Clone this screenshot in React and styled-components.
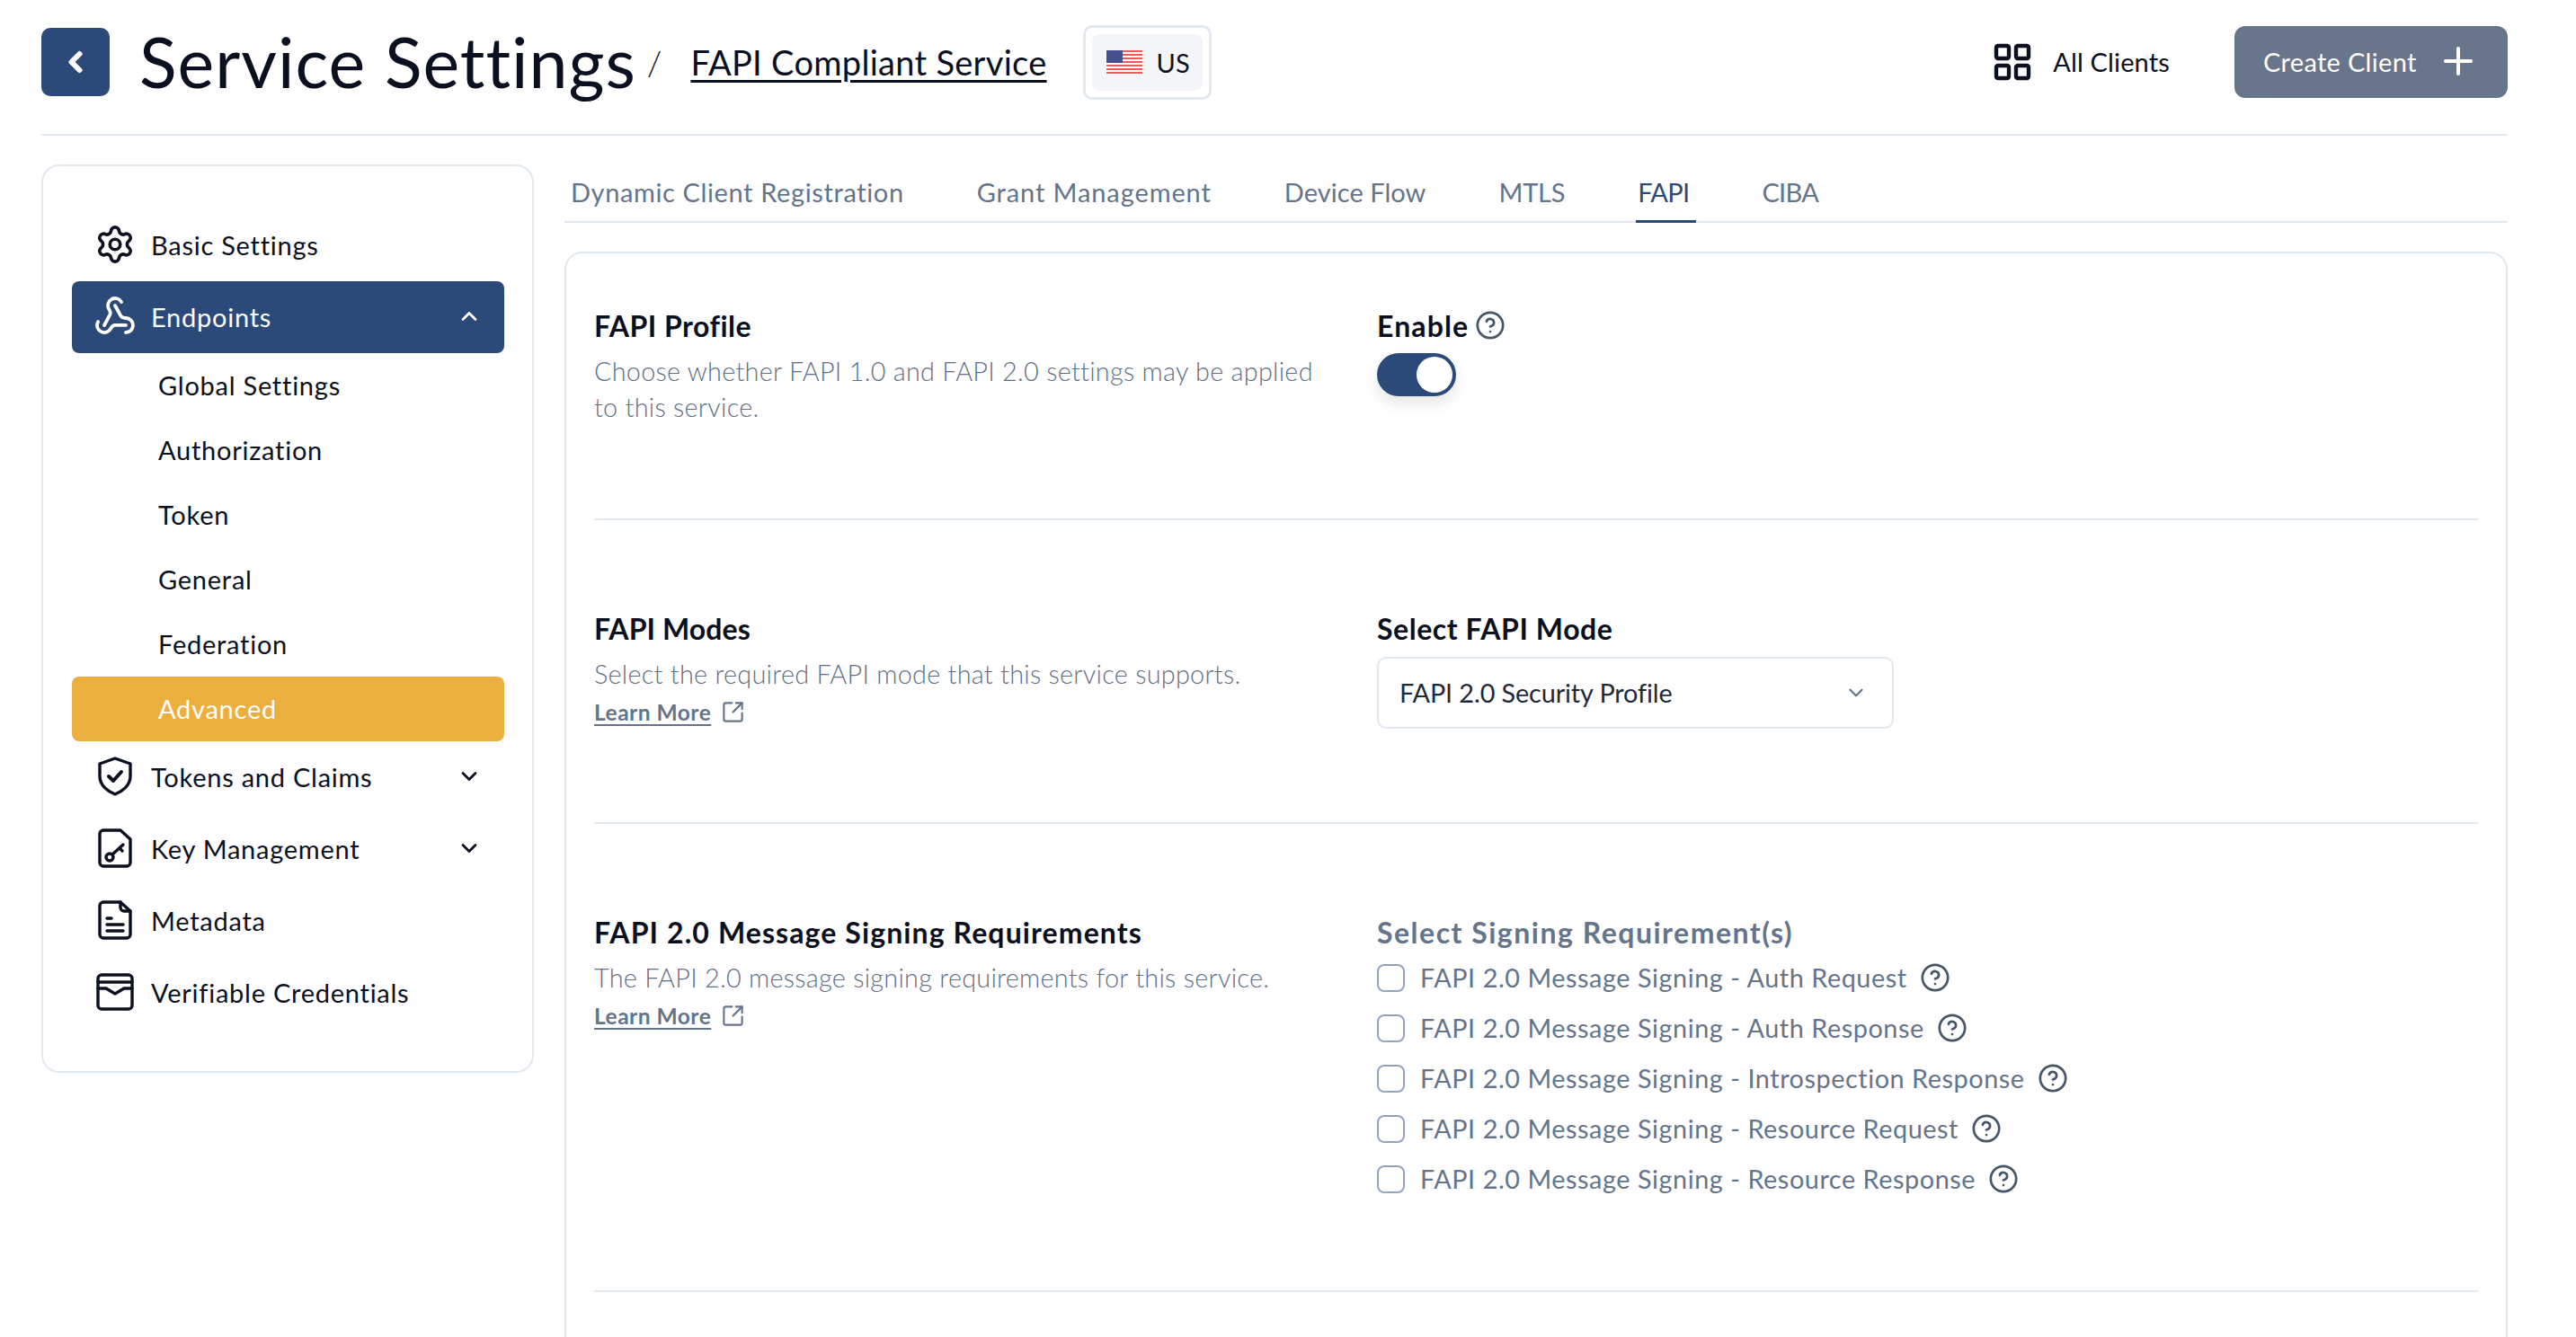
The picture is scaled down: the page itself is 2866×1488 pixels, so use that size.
import React from "react";
import styled, { createGlobalStyle } from "styled-components";
import {
  ChevronDown,
  ChevronLeft,
  ChevronUp,
  CircleHelp,
  LayoutGrid,
  Plus,
  Settings,
  SquareArrowOutUpRight,
  Webhook,
} from "lucide-react";

const GlobalStyle = createGlobalStyle`
  html, body {
    margin: 0;
    padding: 0;
    height: 1488px;
    overflow: hidden;
    background: #fff;
  }
  * { box-sizing: border-box; }
  body {
    font-family: "Lato", "Open Sans", sans-serif;
    color: #0b1020;
  }
`;

const Page = styled.div`
  width: 2866px;
  height: 1488px;
  overflow: hidden;
  padding: 31px 76px 0 46px;
`;

const Header = styled.header`
  display: flex;
  align-items: center;
  height: 120px;
  padding-bottom: 42px;
  border-bottom: 2px solid #e2e8f0;
`;

const BackButton = styled.button`
  display: flex;
  align-items: center;
  justify-content: center;
  width: 76px;
  height: 76px;
  padding: 0;
  border: none;
  border-radius: 10px;
  background: #2b4a7a;
  color: #fff;
`;

const Title = styled.h1`
  margin: 0 0 3px 33px;
  font-size: 77px;
  font-weight: 400;
  line-height: 90px;
  letter-spacing: 1px;
  color: #0b1020;
`;

const Slash = styled.span`
  margin: 0 32px 0 12px;
  font-size: 38px;
  font-weight: 300;
`;

const ServiceLink = styled.a`
  font-size: 38px;
  letter-spacing: 0.3px;
  text-decoration: underline;
  text-decoration-thickness: 3px;
  text-underline-offset: 5px;
  color: #0b1020;
`;

const RegionChip = styled.div`
  margin-left: 40px;
  padding: 7px;
  border: 3px solid #e2e8f0;
  border-radius: 10px;
`;

const RegionInner = styled.div`
  display: flex;
  align-items: center;
  gap: 16px;
  width: 123px;
  height: 63px;
  padding-left: 16px;
  border-radius: 8px;
  background: #f3f5f9;
  font-size: 29px;
`;

const HeaderActions = styled.div`
  display: flex;
  align-items: center;
  margin-left: auto;
`;

const AllClients = styled.div`
  display: flex;
  align-items: center;
  gap: 21px;
  margin-right: 72px;
  padding-bottom: 1px;
  font-size: 29px;
  letter-spacing: 0.15px;
`;

const CreateButton = styled.button`
  display: flex;
  align-items: center;
  justify-content: space-between;
  width: 304px;
  height: 80px;
  padding: 0 31px 2px 32px;
  border: none;
  border-radius: 12px;
  background: #68758b;
  color: #fff;
  font-family: inherit;
  font-size: 29px;
  letter-spacing: 0.3px;
`;

const Body = styled.div`
  display: flex;
  align-items: flex-start;
  gap: 34px;
  margin-top: 32px;
`;

const Sidebar = styled.nav`
  flex: 0 0 548px;
  padding: 48px 31px 47px 32px;
  border: 2px solid #e2e8f0;
  border-radius: 20px;
`;

const NavRow = styled.div`
  display: flex;
  align-items: center;
  gap: 18px;
  height: 80px;
  padding: 0 25px 2px 26px;
  border-radius: 8px;
  font-size: 29px;
  letter-spacing: 0.75px;
  background: ${({ $active }) => ($active ? "#2b4a7a" : "transparent")};
  color: ${({ $active }) => ($active ? "#fff" : "#0b1020")};
`;

const NavIcon = styled.span`
  display: flex;
  justify-content: center;
  flex: 0 0 44px;
  width: 44px;
  min-width: 0;
  svg {
    flex-shrink: 0;
  }
`;

const NavChevron = styled.span`
  display: flex;
  margin-left: auto;
`;

const SubRow = styled.div`
  display: flex;
  align-items: center;
  height: 72px;
  padding: 0 0 2px 96px;
  border-radius: 8px;
  font-size: 29px;
  letter-spacing: 0.75px;
  background: ${({ $active }) => ($active ? "#ecae3d" : "transparent")};
  color: ${({ $active }) => ($active ? "#fff" : "#0b1020")};
`;

const Main = styled.main`
  flex: 1;
  min-width: 0;
`;

const Tabs = styled.div`
  display: flex;
  gap: 81px;
  height: 66px;
  padding-left: 7px;
  margin-top: -1px;
  border-bottom: 2px solid #e2e8f0;
`;

const Tab = styled.div`
  position: relative;
  height: 66px;
  padding-top: 14px;
  font-size: 29px;
  letter-spacing: ${({ $spacing }) => $spacing}px;
  color: ${({ $active }) => ($active ? "#2b4a7a" : "#64748b")};
  &::after {
    content: "";
    display: ${({ $active }) => ($active ? "block" : "none")};
    position: absolute;
    left: -2px;
    right: -8px;
    bottom: 0;
    height: 3px;
    background: #2b4a7a;
  }
`;

const Card = styled.section`
  height: 1300px;
  margin-top: 32px;
  padding: 60px 31px 0 31px;
  border: 2px solid #e2e8f0;
  border-radius: 20px;
`;

const SettingRow = styled.div`
  display: grid;
  grid-template-columns: 871px 1fr;
  padding-bottom: ${({ $bottom }) => $bottom}px;
  margin-bottom: 100px;
  border-bottom: 2px solid #e2e8f0;
`;

const SectionTitle = styled.h3`
  display: flex;
  align-items: center;
  margin: 0;
  height: 40px;
  font-size: 32px;
  font-weight: 700;
  letter-spacing: ${({ $spacing = 1.1 }) => $spacing}px;
  color: ${({ $muted }) => ($muted ? "#64748b" : "#0b1020")};
`;

const Description = styled.p`
  width: 810px;
  margin: 11px 0 0;
  font-size: 28.8px;
  font-weight: 300;
  line-height: 40px;
  letter-spacing: 0.27px;
  color: #5f6f86;
`;

const LearnMore = styled.a`
  display: flex;
  align-items: center;
  gap: 11px;
  margin-top: 8px;
  font-size: 24.5px;
  font-weight: 700;
  letter-spacing: 0.5px;
  color: #64748b;
  span {
    text-decoration: underline;
    text-underline-offset: 4px;
  }
`;

const Toggle = styled.div`
  display: flex;
  align-items: center;
  justify-content: flex-end;
  width: 88px;
  height: 48px;
  margin-top: 11px;
  padding-right: 4px;
  border-radius: 24px;
  background: #2b4a7a;
  box-shadow: 0 8px 16px rgba(15, 23, 42, 0.1);
`;

const ToggleKnob = styled.div`
  width: 40px;
  height: 40px;
  border-radius: 50%;
  background: #fff;
`;

const SelectBox = styled.div`
  display: flex;
  align-items: center;
  justify-content: space-between;
  width: 575px;
  height: 80px;
  margin-top: 12px;
  padding: 0 27px 0 23px;
  border: 2px solid #e2e8f0;
  border-radius: 10px;
  font-size: 28.8px;
  letter-spacing: -0.1px;
  color: #1e293b;
`;

const CheckList = styled.div`
  margin-top: 3px;
`;

const CheckRow = styled.label`
  display: flex;
  align-items: center;
  height: 56px;
  font-size: 28.8px;
  letter-spacing: 0.56px;
  color: #64748b;
`;

const CheckBox = styled.span`
  flex: 0 0 31px;
  height: 31px;
  margin-right: 17px;
  border: 2px solid #94a3c0;
  border-radius: 8px;
`;

const HelpWrap = styled.span`
  display: flex;
  margin-left: ${({ $gap }) => $gap}px;
  color: #475569;
`;

const IconPath = ({ children }) => (
  <svg width="44" height="44" viewBox="0 0 44 44" fill="none" stroke="currentColor" strokeWidth="3.4" strokeLinecap="round" strokeLinejoin="round">
    {children}
  </svg>
);

const ShieldIcon = () => (
  <IconPath>
    <path d="M22 2 L39 8 V22 C39 32 30 39 22 42 C14 39 5 32 5 22 V8 Z" />
    <path d="M15 22 L20 27 L29 17" strokeWidth="4" />
  </IconPath>
);

const KeyFileIcon = () => (
  <IconPath>
    <path d="M10 2 H28 L39 12 V38 A4 4 0 0 1 35 42 H9 A4 4 0 0 1 5 38 V6 A4 4 0 0 1 9 2 Z" />
    <circle cx="16" cy="32" r="4" />
    <path d="M19 29 L31 18 M27 22 L30 25" />
  </IconPath>
);

const FileIcon = () => (
  <IconPath>
    <path d="M10 2 H28 L39 12 V38 A4 4 0 0 1 35 42 H9 A4 4 0 0 1 5 38 V6 A4 4 0 0 1 9 2 Z" />
    <path d="M28 2 V8 A4 4 0 0 0 32 12 H39" />
    <path d="M13 20 H18 M13 27 H31 M13 34 H31" />
  </IconPath>
);

const WalletIcon = () => (
  <IconPath>
    <rect x="3" y="3" width="38" height="38" rx="4" />
    <path d="M3 11 H41 M3 18 H12 L22 24 L32 18 H41" />
  </IconPath>
);

const UsFlag = () => (
  <svg width="40" height="26" viewBox="0 0 40 26">
    <rect width="40" height="26" fill="#fff" />
    {[0, 4, 8, 12, 16, 20, 24].map((y) => (
      <rect key={y} y={y} width="40" height="2" fill="#ef5a5f" />
    ))}
    <rect width="18" height="14" fill="#46508f" />
  </svg>
);

const Help = ({ gap = 14, size = 34 }) => (
  <HelpWrap $gap={gap}>
    <CircleHelp size={size} strokeWidth={1.9} />
  </HelpWrap>
);

const External = () => <SquareArrowOutUpRight size={27} strokeWidth={1.9} />;

const tabs = [
  { label: "Dynamic Client Registration", spacing: 0.62 },
  { label: "Grant Management", spacing: 0.9 },
  { label: "Device Flow", spacing: 0.05 },
  { label: "MTLS", spacing: -0.2 },
  { label: "FAPI", spacing: -0.7 },
  { label: "CIBA", spacing: -0.7 },
];
const subItems = ["Global Settings", "Authorization", "Token", "General", "Federation", "Advanced"];
const signing = [
  "FAPI 2.0 Message Signing - Auth Request",
  "FAPI 2.0 Message Signing - Auth Response",
  "FAPI 2.0 Message Signing - Introspection Response",
  "FAPI 2.0 Message Signing - Resource Request",
  "FAPI 2.0 Message Signing - Resource Response",
];

const App = () => {
  return (
    <Page>
      <GlobalStyle />
      <Header>
        <BackButton>
          <ChevronLeft size={36} strokeWidth={4} />
        </BackButton>
        <Title>Service Settings</Title>
        <Slash>/</Slash>
        <ServiceLink>FAPI Compliant Service</ServiceLink>
        <RegionChip>
          <RegionInner>
            <UsFlag />
            US
          </RegionInner>
        </RegionChip>
        <HeaderActions>
          <AllClients>
            <LayoutGrid size={48} strokeWidth={2.2} />
            All Clients
          </AllClients>
          <CreateButton>
            Create Client
            <Plus size={48} strokeWidth={2} />
          </CreateButton>
        </HeaderActions>
      </Header>
      <Body>
        <Sidebar>
          <NavRow>
            <NavIcon>
              <Settings size={46} strokeWidth={1.9} />
            </NavIcon>
            Basic Settings
          </NavRow>
          <NavRow $active>
            <NavIcon>
              <Webhook size={48} strokeWidth={1.9} />
            </NavIcon>
            Endpoints
            <NavChevron>
              <ChevronUp size={28} strokeWidth={2.4} />
            </NavChevron>
          </NavRow>
          {subItems.map((item) => (
            <SubRow key={item} $active={item === "Advanced"}>
              {item}
            </SubRow>
          ))}
          <NavRow>
            <NavIcon>
              <ShieldIcon />
            </NavIcon>
            Tokens and Claims
            <NavChevron>
              <ChevronDown size={28} strokeWidth={2.4} />
            </NavChevron>
          </NavRow>
          <NavRow>
            <NavIcon>
              <KeyFileIcon />
            </NavIcon>
            Key Management
            <NavChevron>
              <ChevronDown size={28} strokeWidth={2.4} />
            </NavChevron>
          </NavRow>
          <NavRow>
            <NavIcon>
              <FileIcon />
            </NavIcon>
            Metadata
          </NavRow>
          <NavRow>
            <NavIcon>
              <WalletIcon />
            </NavIcon>
            Verifiable Credentials
          </NavRow>
        </Sidebar>
        <Main>
          <Tabs>
            {tabs.map((tab) => (
              <Tab key={tab.label} $active={tab.label === "FAPI"} $spacing={tab.spacing}>
                {tab.label}
              </Tab>
            ))}
          </Tabs>
          <Card>
            <SettingRow $bottom={104}>
              <div>
                <SectionTitle $spacing={0.5}>FAPI Profile</SectionTitle>
                <Description>Choose whether FAPI 1.0 and FAPI 2.0 settings may be applied to this service.</Description>
              </div>
              <div>
                <SectionTitle>
                  Enable
                  <Help gap={7} />
                </SectionTitle>
                <Toggle>
                  <ToggleKnob />
                </Toggle>
              </div>
            </SettingRow>
            <SettingRow $bottom={104}>
              <div>
                <SectionTitle $spacing={0.1}>FAPI Modes</SectionTitle>
                <Description>Select the required FAPI mode that this service supports.</Description>
                <LearnMore>
                  <span>Learn More</span>
                  <External />
                </LearnMore>
              </div>
              <div>
                <SectionTitle $spacing={0.55}>Select FAPI Mode</SectionTitle>
                <SelectBox>
                  FAPI 2.0 Security Profile
                  <ChevronDown size={26} strokeWidth={2} color="#64748b" />
                </SelectBox>
              </div>
            </SettingRow>
            <SettingRow $bottom={96}>
              <div>
                <SectionTitle>FAPI 2.0 Message Signing Requirements</SectionTitle>
                <Description>The FAPI 2.0 message signing requirements for this service.</Description>
                <LearnMore>
                  <span>Learn More</span>
                  <External />
                </LearnMore>
              </div>
              <div>
                <SectionTitle $muted $spacing={1.5}>
                  Select Signing Requirement(s)
                </SectionTitle>
                <CheckList>
                  {signing.map((item) => (
                    <CheckRow key={item}>
                      <CheckBox />
                      {item}
                      <Help />
                    </CheckRow>
                  ))}
                </CheckList>
              </div>
            </SettingRow>
          </Card>
        </Main>
      </Body>
    </Page>
  );
};

export default App;
